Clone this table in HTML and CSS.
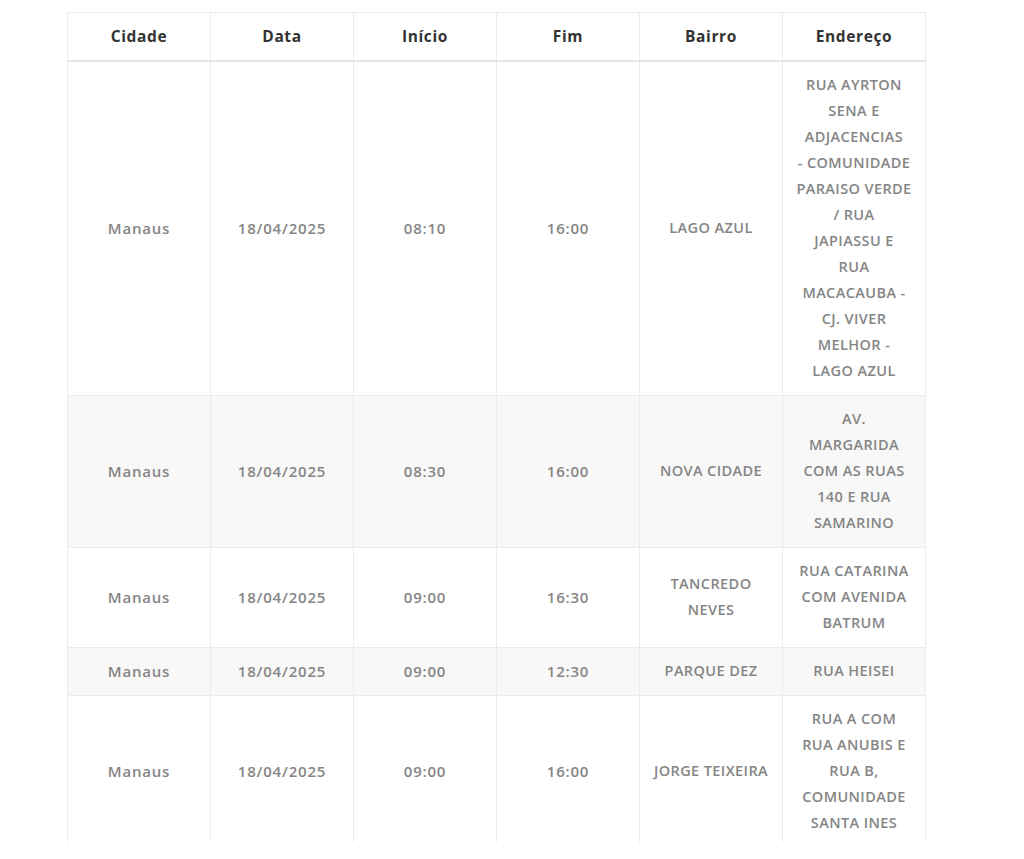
FILE: index.html
```html
<!DOCTYPE html>
<html lang="pt-BR">
<head>
<meta charset="utf-8">
<title>Programação</title>
<link rel="stylesheet" href="styles.css">
</head>
<body>
<div class="frame">
  <table class="schedule">
    <thead>
      <tr>
        <th>Cidade</th>
        <th>Data</th>
        <th>Início</th>
        <th>Fim</th>
        <th>Bairro</th>
        <th>Endereço</th>
      </tr>
    </thead>
    <tbody>
      <tr class="r-odd">
        <td>Manaus</td>
        <td>18/04/2025</td>
        <td>08:10</td>
        <td>16:00</td>
        <td class="up">LAGO AZUL</td>
        <td class="up">RUA AYRTON<br>SENA E<br>ADJACENCIAS<br>- COMUNIDADE<br>PARAISO VERDE<br>/ RUA<br>JAPIASSU E<br>RUA<br>MACACAUBA -<br>CJ. VIVER<br>MELHOR -<br>LAGO AZUL</td>
      </tr>
      <tr class="r-even">
        <td>Manaus</td>
        <td>18/04/2025</td>
        <td>08:30</td>
        <td>16:00</td>
        <td class="up">NOVA CIDADE</td>
        <td class="up">AV.<br>MARGARIDA<br>COM AS RUAS<br>140 E RUA<br>SAMARINO</td>
      </tr>
      <tr class="r-odd">
        <td>Manaus</td>
        <td>18/04/2025</td>
        <td>09:00</td>
        <td>16:30</td>
        <td class="up">TANCREDO<br>NEVES</td>
        <td class="up">RUA CATARINA<br>COM AVENIDA<br>BATRUM</td>
      </tr>
      <tr class="r-even">
        <td>Manaus</td>
        <td>18/04/2025</td>
        <td>09:00</td>
        <td>12:30</td>
        <td class="up">PARQUE DEZ</td>
        <td class="up">RUA HEISEI</td>
      </tr>
      <tr class="r-odd">
        <td>Manaus</td>
        <td>18/04/2025</td>
        <td>09:00</td>
        <td>16:00</td>
        <td class="up">JORGE TEIXEIRA</td>
        <td class="up">RUA A COM<br>RUA ANUBIS E<br>RUA B,<br>COMUNIDADE<br>SANTA INES</td>
      </tr>
    </tbody>
  </table>
</div>
</body>
</html>
```

FILE: styles.css
```css
html, body {
  margin: 0;
  padding: 0;
  background: #ffffff;
}

body {
  font-family: "Open Sans", "Noto Sans", "Liberation Sans", sans-serif;
}

.frame {
  margin: 12px 0 0 67px;
  width: 859px;
  height: 830px;
  overflow: hidden;
}

.schedule {
  width: 859px;
  border-collapse: collapse;
  table-layout: fixed;
}

.schedule th,
.schedule td {
  border: 1px solid #ebebeb;
  text-align: center;
  vertical-align: middle;
  padding: 10px 6px 11px;
  line-height: 26px;
}

.schedule th {
  padding: 10px 6px 11px;
  font-size: 15.5px;
  font-weight: 700;
  letter-spacing: 0.6px;
  color: #333333;
  background: #ffffff;
  border-bottom: 2px solid #e6e6e6;
}

.schedule td {
  font-size: 15px;
  font-weight: 600;
  letter-spacing: 0.8px;
  color: #858585;
}

.schedule td.up {
  font-size: 14.5px;
  letter-spacing: 0.4px;
}

.r-odd td {
  background: #ffffff;
}

.r-even td {
  background: #f8f8f8;
}
```
